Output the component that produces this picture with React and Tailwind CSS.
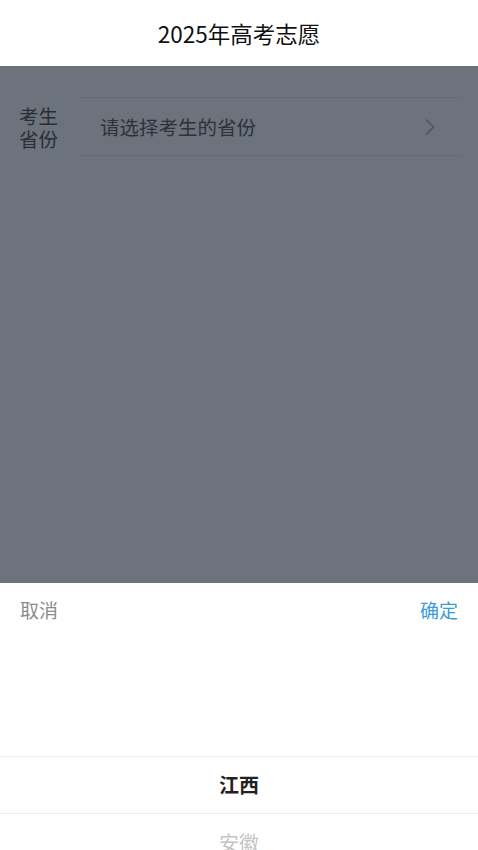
import React from 'react';

const cjk = { fontFamily: '"Noto Sans CJK SC", "Noto Sans", sans-serif' };

export default function App() {
  return (
    <div className="flex flex-col h-[850px] w-full overflow-hidden bg-white" style={cjk}>
      {/* 标题栏 */}
      <div className="h-[66px] flex items-center justify-center shrink-0">
        <h1 className="text-[22.5px] text-[#111] leading-none">2025年高考志愿</h1>
      </div>

      {/* 遮罩下的表单 */}
      <div className="flex-1 bg-[#6c737d] pt-[31px]">
        <div className="flex items-center">
          <p className="w-[80px] pl-[19px] text-[19.5px] leading-[23px] text-[#2a2e34]">
            考生<br />省份
          </p>
          <div className="flex-1 mr-[16px] h-[59px] flex items-center justify-between border-y border-[#656c75] pl-[20px] pr-[26px]">
            <span className="text-[19.5px] text-[#2e3237]">请选择考生的省份</span>
            <svg width="12" height="18" viewBox="0 0 12 18" fill="none">
              <path d="M2 1.5 L9.5 9 L2 16.5" stroke="#4b515a" strokeWidth="1.4" />
            </svg>
          </div>
        </div>
      </div>

      {/* 底部选择器 */}
      <div className="h-[267px] shrink-0 bg-white flex flex-col">
        <div className="h-[55px] shrink-0 flex items-center justify-between px-[20px]">
          <button className="text-[19px] text-[#8c8c8c]">取消</button>
          <button className="text-[19px] text-[#3a9bd6]">确定</button>
        </div>
        <div className="h-[118px] shrink-0" />
        <div className="h-[58px] shrink-0 flex items-center justify-center border-y border-[#ececec]">
          <span className="text-[20px] font-bold text-[#222]">江西</span>
        </div>
        <div className="h-[58px] shrink-0 flex items-center justify-center">
          <span className="text-[20px] text-[#c4c4c4]">安徽</span>
        </div>
      </div>
    </div>
  );
}
